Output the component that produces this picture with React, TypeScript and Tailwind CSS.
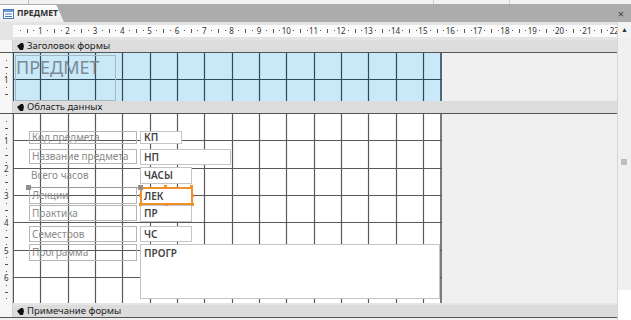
const CM = 27.33;

type Ctl = { text: string; left: number; top: number; w: number; h: number; border?: boolean };

const labels: Ctl[] = [
  { text: 'Код предмета', left: 16, top: 17, w: 108, h: 13, border: true },
  { text: 'Название предмета', left: 16, top: 35, w: 108, h: 15, border: true },
  { text: 'Всего часов', left: 16, top: 53, w: 108, h: 16, border: false },
  { text: 'Лекции', left: 16, top: 73, w: 108, h: 17, border: true },
  { text: 'Практика', left: 16, top: 91, w: 108, h: 16, border: true },
  { text: 'Семестров', left: 16, top: 112, w: 108, h: 16, border: true },
  { text: 'Программа', left: 16, top: 130, w: 108, h: 17, border: true },
];

const boxes: Ctl[] = [
  { text: 'КП', left: 127, top: 17, w: 42, h: 13 },
  { text: 'НП', left: 127, top: 35, w: 91, h: 16 },
  { text: 'ЧАСЫ', left: 127, top: 53, w: 52, h: 17 },
  { text: 'ПР', left: 127, top: 91, w: 52, h: 17 },
  { text: 'ЧС', left: 127, top: 112, w: 52, h: 16 },
  { text: 'ПРОГР', left: 127, top: 130, w: 300, h: 55 },
];

function HRuler() {
  const marks = [];
  for (let n = 0; n < 23; n++) {
    const x = n * CM;
    if (n > 0)
      marks.push(
        <span key={'n' + n} className="absolute top-0 -translate-x-1/2 text-[8px] leading-[12px]" style={{ left: x }}>
          {n}
        </span>
      );
    marks.push(<span key={'a' + n} className="absolute top-[5px] w-[1px] h-[1px] bg-[#555]" style={{ left: x + CM * 0.25 }} />);
    marks.push(<span key={'b' + n} className="absolute top-[4px] w-[1px] h-[4px] bg-[#555]" style={{ left: x + CM * 0.5 }} />);
    marks.push(<span key={'c' + n} className="absolute top-[5px] w-[1px] h-[1px] bg-[#555]" style={{ left: x + CM * 0.75 }} />);
  }
  return <div className="relative h-[12px] bg-[#fbfbfb] overflow-hidden text-[#333]">{marks}</div>;
}

function VRuler({ count, height }: { count: number; height: number }) {
  const marks = [];
  for (let n = 0; n <= count; n++) {
    const y = n * CM;
    if (n > 0)
      marks.push(
        <span key={'n' + n} className="absolute left-[4px] -translate-y-1/2 text-[8px] leading-[8px]" style={{ top: y }}>
          {n}
        </span>
      );
    marks.push(<span key={'a' + n} className="absolute left-[6px] w-[1px] h-[1px] bg-[#555]" style={{ top: y + CM * 0.25 }} />);
    marks.push(<span key={'b' + n} className="absolute left-[5px] w-[3px] h-[1px] bg-[#555]" style={{ top: y + CM * 0.5 }} />);
    marks.push(<span key={'c' + n} className="absolute left-[6px] w-[1px] h-[1px] bg-[#555]" style={{ top: y + CM * 0.75 }} />);
  }
  return (
    <div className="relative w-[13px] bg-[#f6f6f6] border-r border-[#d0d0d0] overflow-hidden text-[#333]" style={{ height }}>
      {marks}
    </div>
  );
}

function Grid({ w, h, rows, color }: { w: number; h: number; rows: number; color: string }) {
  const v = [];
  for (let i = 1; i <= 15; i++) v.push(Math.round(i * CM) + 0.5);
  const hz = [];
  for (let k = 1; k <= rows; k++) hz.push(Math.round(k * CM) - 0.5);
  return (
    <svg className="absolute inset-0" width={w} height={h}>
      {v.map((x) => (
        <line key={'v' + x} x1={x} y1={0} x2={x} y2={h} stroke={color} strokeWidth={1.2} />
      ))}
      {hz.map((y) => (
        <line key={'h' + y} x1={0} y1={y} x2={w} y2={y} stroke={color} strokeWidth={1.2} />
      ))}
      <line x1={0.5} y1={0} x2={0.5} y2={h} stroke={color} strokeWidth={1} />
      <line x1={w - 1} y1={0} x2={w - 1} y2={h} stroke={color} strokeWidth={1.6} />
    </svg>
  );
}

function SectionBar({ title }: { title: string }) {
  return (
    <div className="flex h-[12px]">
      <div className="w-[13px] bg-[#f6f6f6] border-r border-[#d0d0d0]" />
      <div className="flex-1 bg-[#dcdcdc] flex items-center pl-[4px] gap-[3px] text-[9.5px] text-[#222]">
        <svg width="7" height="7" viewBox="0 0 7 7">
          <polygon points="0,3 4,0 6,0 7,3 6,7 3,7" fill="#111" />
        </svg>
        <span className="leading-[12px]">{title}</span>
      </div>
    </div>
  );
}

export default function App() {
  return (
    <div className="w-[631px] h-[320px] overflow-hidden flex flex-col bg-[#f0f0f0] font-['Noto_Sans',sans-serif]">
      <div className="h-[4px] bg-[#f3f1f1] relative">
        <div className="absolute left-[28px] top-0 w-[1px] h-[4px] bg-[#bbb]" />
        <div className="absolute left-[433px] top-0 w-[1px] h-[4px] bg-[#ccc]" />
        <div className="absolute left-[509px] top-0 w-[1px] h-[4px] bg-[#ccc]" />
      </div>

      <div className="h-[18px] bg-[#acacac] flex items-end justify-between">
        <div className="h-[17px] w-[64px] bg-gradient-to-b from-[#ffffff] to-[#ececec] [clip-path:polygon(0_0,88%_0,100%_100%,0_100%)] flex items-center gap-[3px] pl-[3px]">
          <svg width="11" height="10" viewBox="0 0 11 10">
            <rect x="0.5" y="0.5" width="10" height="9" fill="#fff" stroke="#4a78b5" />
            <rect x="1" y="1" width="9" height="2" fill="#6c9bd6" />
            <line x1="2" y1="5" x2="9" y2="5" stroke="#4a78b5" />
            <line x1="2" y1="7.5" x2="9" y2="7.5" stroke="#4a78b5" />
          </svg>
          <span className="text-[8.5px] font-bold text-[#333] leading-none">ПРЕДМЕТ</span>
        </div>
        <div className="self-center pr-[7px] text-[11px] leading-none text-[#444]">×</div>
      </div>

      <div className="flex flex-1">
        <div className="flex-1 flex flex-col">
          <div className="h-[18px] flex bg-[#e4e4e4]">
            <div className="w-[13px]" />
            <div className="flex-1 py-[3px]">
              <HRuler />
            </div>
          </div>

          <SectionBar title="Заголовок формы" />

          <div className="flex h-[49px] border-t border-[#555]">
            <VRuler count={1} height={48} />
            <div className="relative w-[429px] h-[48px] bg-[#c9e8f8]">
              <Grid w={429} h={48} rows={1} color="#2f4a58" />
              <div className="absolute left-[2px] top-[2px] w-[101px] h-[46px] border border-[#a9b7c0]" />
              <div className="absolute left-[3px] top-[2px] text-[18px] leading-[24px] text-[#7b8a95]">ПРЕДМЕТ</div>
            </div>
            <div className="flex-1 bg-[#f0f0f0]" />
          </div>

          <SectionBar title="Область данных" />

          <div className="flex h-[190px] border-t border-[#555]">
            <VRuler count={6} height={189} />
            <div className="relative w-[429px] h-[189px] bg-white">
              <Grid w={429} h={189} rows={6} color="#5a5a5a" />
              {labels.map((l) => (
                <div
                  key={l.text}
                  className={`absolute flex items-center pl-[2px] text-[10px] text-[#8a8a8a] whitespace-nowrap ${
                    l.border ? 'border border-[#b5b5b5]' : ''
                  }`}
                  style={{ left: l.left, top: l.top, width: l.w, height: l.h }}
                >
                  {l.text}
                </div>
              ))}
              {boxes.map((b) => (
                <div
                  key={b.text}
                  className={`absolute flex pl-[3px] bg-white border border-[#c4c4c4] text-[10px] font-semibold text-[#444] ${
                    b.h > 30 ? 'items-start pt-[1px]' : 'items-center'
                  }`}
                  style={{ left: b.left, top: b.top, width: b.w, height: b.h }}
                >
                  {b.text}
                </div>
              ))}
              <div className="absolute left-[15px] top-[73px] w-[113px] h-[1px] bg-[#9a9a9a]" />
              <div className="absolute left-[13px] top-[71px] w-[5px] h-[5px] bg-[#8f8f8f]" />
              <div className="absolute left-[127px] top-[73px] w-[53px] h-[18px] bg-white border-2 border-[#f0902a] flex items-center pl-[2px] text-[10px] font-semibold text-[#444]">
                ЛЕК
              </div>
              <div className="absolute left-[125px] top-[71px] w-[5px] h-[5px] bg-[#8f8f8f]" />
              <div className="absolute left-[151px] top-[71px] w-[3px] h-[3px] bg-[#f0902a]" />
              <div className="absolute left-[177px] top-[71px] w-[3px] h-[3px] bg-[#f0902a]" />
              <div className="absolute left-[126px] top-[80px] w-[3px] h-[3px] bg-[#f0902a]" />
              <div className="absolute left-[178px] top-[80px] w-[3px] h-[3px] bg-[#f0902a]" />
              <div className="absolute left-[126px] top-[89px] w-[3px] h-[3px] bg-[#f0902a]" />
              <div className="absolute left-[152px] top-[89px] w-[3px] h-[3px] bg-[#f0902a]" />
              <div className="absolute left-[178px] top-[89px] w-[3px] h-[3px] bg-[#f0902a]" />
            </div>
            <div className="flex-1 bg-[#f0f0f0]" />
          </div>

          <div className="h-[2px] flex">
            <div className="w-[13px] bg-[#f6f6f6] border-r border-[#d0d0d0]" />
            <div className="flex-1 bg-[#e6e6e6]" />
          </div>

          <SectionBar title="Примечание формы" />

          <div className="h-[3px] border-t border-[#555] bg-[#f0f0f0]" />
        </div>

        <div className="w-[14px] flex flex-col bg-[#f0f0f0] border-l border-[#d6d6d6]">
          <div className="h-[16px] flex items-center justify-center text-[7px] text-[#333] bg-[#f3f3f3]">▲</div>
          <div className="flex-1 relative">
            <div className="absolute left-[3px] top-[121px] w-[6px] h-[6px] bg-[#bdbdbd]" />
          </div>
          <div className="h-[30px] bg-white" />
        </div>
      </div>
    </div>
  );
}
